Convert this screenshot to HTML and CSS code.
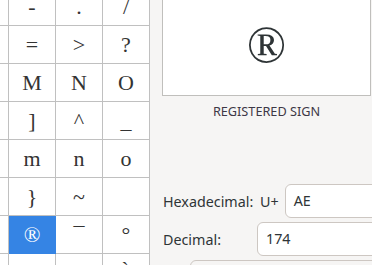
FILE: index.html
```html
<!DOCTYPE html>
<html>

	<head>
		<meta charset="UTF-8">
		<title>Characters</title>
		<link rel="stylesheet" href="styles.css">
	</head>

	<body>
		<div class="window">
			<div class="chars">
				<div class="grid">
					<div class="cell">,</div>
					<div class="cell">-</div>
					<div class="cell">.</div>
					<div class="cell">/</div>

					<div class="cell">&lt;</div>
					<div class="cell">=</div>
					<div class="cell">&gt;</div>
					<div class="cell">?</div>

					<div class="cell">L</div>
					<div class="cell">M</div>
					<div class="cell">N</div>
					<div class="cell">O</div>

					<div class="cell">\</div>
					<div class="cell">]</div>
					<div class="cell">^</div>
					<div class="cell">_</div>

					<div class="cell">l</div>
					<div class="cell">m</div>
					<div class="cell">n</div>
					<div class="cell">o</div>

					<div class="cell">|</div>
					<div class="cell">}</div>
					<div class="cell">~</div>
					<div class="cell"></div>

					<div class="cell"></div>
					<div class="cell selected">®</div>
					<div class="cell">¯</div>
					<div class="cell">°</div>

					<div class="cell">½</div>
					<div class="cell">¾</div>
					<div class="cell">¿</div>
					<div class="cell">À</div>
				</div>
			</div>

			<div class="detail">
				<div class="preview">®</div>
				<div class="name">REGISTERED SIGN</div>
				<div class="codes">
					<span class="label">Hexadecimal:</span>
					<div class="hex">
						<span class="prefix">U+</span>
						<div class="field">AE</div>
					</div>
					<span class="label">Decimal:</span>
					<div class="field">174</div>
				</div>
				<div class="more"></div>
			</div>
		</div>
	</body>

</html>
```

FILE: styles.css
```css
body {
	margin: 0;
	background-color: #f6f5f4;
	overflow: hidden;
}

.window {
	display: flex;
	width: 372px;
	height: 265px;
	overflow: hidden;
}

/* 字符网格 */
.chars {
	width: 150px;
	flex: none;
	overflow: hidden;
	background-color: #fff;
}

.grid {
	display: grid;
	grid-template-columns: repeat(4, 47px);
	grid-auto-rows: 38px;
	margin: -12px 0 0 -38px;
}

.cell {
	box-sizing: border-box;
	display: flex;
	align-items: center;
	justify-content: center;
	border-right: 1px solid #c0c0c0;
	border-bottom: 1px solid #c0c0c0;
	font-family: "Liberation Serif", serif;
	font-size: 22px;
	color: #333;
}

.cell.selected {
	background-color: #3584e4;
	border-color: #3584e4;
	color: #fff;
}

/* 右侧详情 */
.detail {
	flex: 1;
	min-width: 0;
	padding-left: 12px;
	font-family: "Noto Sans", sans-serif;
	color: #2e3436;
}

.preview {
	box-sizing: border-box;
	width: 209px;
	height: 106px;
	margin-top: -10px;
	padding-top: 2px;
	display: flex;
	align-items: center;
	justify-content: center;
	background-color: #fff;
	border: 1px solid #c0bfbc;
	font-family: "Liberation Serif", serif;
	font-size: 52px;
	color: #2e3436;
}

.name {
	width: 209px;
	margin-top: 6px;
	text-align: center;
	font-size: 12.7px;
	line-height: 18px;
	color: #3d3846;
}

.codes {
	display: grid;
	grid-template-columns: 95px 1fr;
	grid-auto-rows: 34px;
	row-gap: 4px;
	align-items: center;
	margin-top: 64px;
	margin-right: -6px;
	font-size: 14.3px;
}

.label {
	padding-left: 1px;
}

.hex {
	display: flex;
	align-items: center;
	gap: 6px;
	height: 100%;
	padding-left: 3px;
}

.field {
	box-sizing: border-box;
	flex: 1;
	height: 34px;
	line-height: 32px;
	padding-left: 8px;
	background-color: #fff;
	border: 1px solid #cdc7c2;
	border-radius: 6px;
}

.more {
	height: 30px;
	margin: 4px -6px 0 28px;
	border: 1px solid #cdc7c2;
	border-radius: 6px;
}
```
